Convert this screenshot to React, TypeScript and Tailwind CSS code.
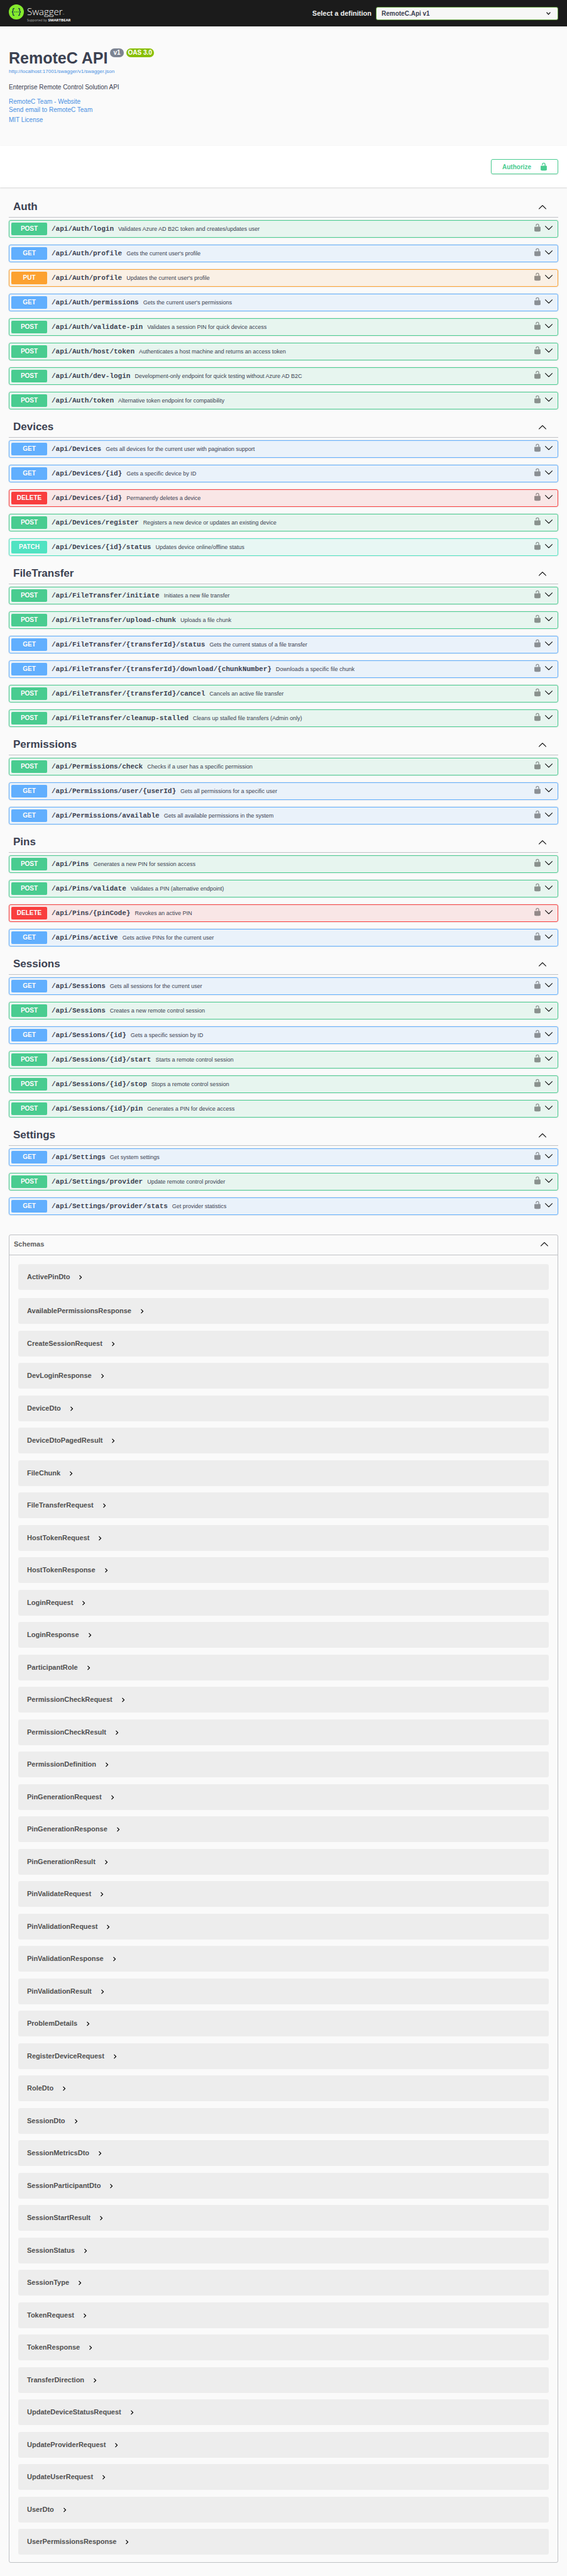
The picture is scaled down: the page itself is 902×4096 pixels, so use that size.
type Method = "GET" | "POST" | "PUT" | "DELETE" | "PATCH";
type Operation = [method: Method, path: string, summary: string];

const sections: { name: string; operations: Operation[] }[] = [
  {
    name: "Auth",
    operations: [
      ["POST", "/api/Auth/login", "Validates Azure AD B2C token and creates/updates user"],
      ["GET", "/api/Auth/profile", "Gets the current user's profile"],
      ["PUT", "/api/Auth/profile", "Updates the current user's profile"],
      ["GET", "/api/Auth/permissions", "Gets the current user's permissions"],
      ["POST", "/api/Auth/validate-pin", "Validates a session PIN for quick device access"],
      ["POST", "/api/Auth/host/token", "Authenticates a host machine and returns an access token"],
      ["POST", "/api/Auth/dev-login", "Development-only endpoint for quick testing without Azure AD B2C"],
      ["POST", "/api/Auth/token", "Alternative token endpoint for compatibility"],
    ],
  },
  {
    name: "Devices",
    operations: [
      ["GET", "/api/Devices", "Gets all devices for the current user with pagination support"],
      ["GET", "/api/Devices/{id}", "Gets a specific device by ID"],
      ["DELETE", "/api/Devices/{id}", "Permanently deletes a device"],
      ["POST", "/api/Devices/register", "Registers a new device or updates an existing device"],
      ["PATCH", "/api/Devices/{id}/status", "Updates device online/offline status"],
    ],
  },
  {
    name: "FileTransfer",
    operations: [
      ["POST", "/api/FileTransfer/initiate", "Initiates a new file transfer"],
      ["POST", "/api/FileTransfer/upload-chunk", "Uploads a file chunk"],
      ["GET", "/api/FileTransfer/{transferId}/status", "Gets the current status of a file transfer"],
      ["GET", "/api/FileTransfer/{transferId}/download/{chunkNumber}", "Downloads a specific file chunk"],
      ["POST", "/api/FileTransfer/{transferId}/cancel", "Cancels an active file transfer"],
      ["POST", "/api/FileTransfer/cleanup-stalled", "Cleans up stalled file transfers (Admin only)"],
    ],
  },
  {
    name: "Permissions",
    operations: [
      ["POST", "/api/Permissions/check", "Checks if a user has a specific permission"],
      ["GET", "/api/Permissions/user/{userId}", "Gets all permissions for a specific user"],
      ["GET", "/api/Permissions/available", "Gets all available permissions in the system"],
    ],
  },
  {
    name: "Pins",
    operations: [
      ["POST", "/api/Pins", "Generates a new PIN for session access"],
      ["POST", "/api/Pins/validate", "Validates a PIN (alternative endpoint)"],
      ["DELETE", "/api/Pins/{pinCode}", "Revokes an active PIN"],
      ["GET", "/api/Pins/active", "Gets active PINs for the current user"],
    ],
  },
  {
    name: "Sessions",
    operations: [
      ["GET", "/api/Sessions", "Gets all sessions for the current user"],
      ["POST", "/api/Sessions", "Creates a new remote control session"],
      ["GET", "/api/Sessions/{id}", "Gets a specific session by ID"],
      ["POST", "/api/Sessions/{id}/start", "Starts a remote control session"],
      ["POST", "/api/Sessions/{id}/stop", "Stops a remote control session"],
      ["POST", "/api/Sessions/{id}/pin", "Generates a PIN for device access"],
    ],
  },
  {
    name: "Settings",
    operations: [
      ["GET", "/api/Settings", "Get system settings"],
      ["POST", "/api/Settings/provider", "Update remote control provider"],
      ["GET", "/api/Settings/provider/stats", "Get provider statistics"],
    ],
  },
];

const schemas = [
  "ActivePinDto",
  "AvailablePermissionsResponse",
  "CreateSessionRequest",
  "DevLoginResponse",
  "DeviceDto",
  "DeviceDtoPagedResult",
  "FileChunk",
  "FileTransferRequest",
  "HostTokenRequest",
  "HostTokenResponse",
  "LoginRequest",
  "LoginResponse",
  "ParticipantRole",
  "PermissionCheckRequest",
  "PermissionCheckResult",
  "PermissionDefinition",
  "PinGenerationRequest",
  "PinGenerationResponse",
  "PinGenerationResult",
  "PinValidateRequest",
  "PinValidationRequest",
  "PinValidationResponse",
  "PinValidationResult",
  "ProblemDetails",
  "RegisterDeviceRequest",
  "RoleDto",
  "SessionDto",
  "SessionMetricsDto",
  "SessionParticipantDto",
  "SessionStartResult",
  "SessionStatus",
  "SessionType",
  "TokenRequest",
  "TokenResponse",
  "TransferDirection",
  "UpdateDeviceStatusRequest",
  "UpdateProviderRequest",
  "UpdateUserRequest",
  "UserDto",
  "UserPermissionsResponse",
];

const rowColors: Record<Method, string> = {
  GET: "border-[#61affe] bg-[#61affe]/10",
  POST: "border-[#49cc90] bg-[#49cc90]/10",
  PUT: "border-[#fca130] bg-[#fca130]/10",
  DELETE: "border-[#f93e3e] bg-[#f93e3e]/10",
  PATCH: "border-[#50e3c2] bg-[#50e3c2]/10",
};

const badgeColors: Record<Method, string> = {
  GET: "bg-[#61affe]",
  POST: "bg-[#49cc90]",
  PUT: "bg-[#fca130]",
  DELETE: "bg-[#f93e3e]",
  PATCH: "bg-[#50e3c2]",
};

function ArrowUp() {
  return (
    <svg viewBox="0 0 20 20" className="size-3.5 fill-black" aria-hidden="true">
      <path d="M17.418 14.908c.272.268.709.268.979 0s.271-.701 0-.969l-7.908-7.83c-.27-.268-.707-.268-.979 0l-7.908 7.83c-.27.268-.27.701 0 .969.271.268.709.268.979 0L10 7.767l7.418 7.141z" />
    </svg>
  );
}

function ArrowDown() {
  return (
    <svg viewBox="0 0 20 20" className="size-3.5 fill-black" aria-hidden="true">
      <path d="M17.418 6.109c.272-.268.709-.268.979 0s.271.701 0 .969l-7.908 7.83c-.27.268-.707.268-.979 0l-7.908-7.83c-.27-.268-.27-.701 0-.969.271-.268.709-.268.979 0L10 13.25l7.418-7.141z" />
    </svg>
  );
}

function Unlocked() {
  return (
    <svg viewBox="0 0 20 20" className="size-3.5 fill-current" aria-hidden="true">
      <path d="M15.8 8H14V5.6C14 2.703 12.665 1 10 1 7.334 1 6 2.703 6 5.6V6h2v-.801C8 3.754 8.797 3 10 3c1.203 0 2 .754 2 2.199V8H4c-.553 0-1 .646-1 1.199V17c0 .549.428 1.139.951 1.307l1.197.387C5.672 18.861 6.55 19 7.1 19h5.8c.549 0 1.428-.139 1.951-.307l1.196-.387c.524-.167.953-.757.953-1.306V9.199C17 8.646 16.352 8 15.8 8z" />
    </svg>
  );
}

function Logo() {
  return (
    <a href="#" className="flex items-start gap-[5px] text-white" aria-label="Swagger, supported by SmartBear">
      <svg viewBox="0 0 34 34" className="mt-[7px] size-6" aria-hidden="true">
        <circle cx="17" cy="17" r="17" fill="#85ea2d" />
        <g fill="none" stroke="#173647" strokeWidth="1.9" strokeLinecap="butt">
          <path d="M12.6 9.2h-.8c-1.7 0-2.4.9-2.4 2.4v2.6c0 1.7-.6 2.7-2.4 2.8 1.8.1 2.4 1.1 2.4 2.8v2.6c0 1.5.7 2.4 2.4 2.4h.8" />
          <path d="M21.4 9.2h.8c1.7 0 2.4.9 2.4 2.4v2.6c0 1.7.6 2.7 2.4 2.8-1.8.1-2.4 1.1-2.4 2.8v2.6c0 1.5-.7 2.4-2.4 2.4h-.8" />
        </g>
        <g fill="#173647">
          <circle cx="12.9" cy="17" r="1.15" />
          <circle cx="17" cy="17" r="1.15" />
          <circle cx="21.1" cy="17" r="1.15" />
        </g>
      </svg>
      <span className="flex flex-col pt-2 font-['Open_Sans',sans-serif]">
        <span className="flex items-end text-[15px] leading-5 font-light">
          Swagger<span className="text-[3px] leading-[10px]">™</span>
        </span>
        <span className="flex items-baseline gap-[2px] leading-2">
          <span className="text-[5px] text-[#b0b0b0]">Supported by</span>
          <span className="text-[6px] font-bold">SMARTBEAR</span>
        </span>
      </span>
    </a>
  );
}

function OperationRow({ operation }: { operation: Operation }) {
  const [method, path, summary] = operation;
  return (
    <div
      className={`mb-[11px] flex items-center rounded-[3px] border py-[3px] pr-[7px] pl-[3px] shadow-[0_0_2px_rgba(0,0,0,0.19)] ${rowColors[method]}`}
    >
      <button type="button" className="flex min-w-0 flex-1 items-center text-left">
        <span
          className={`w-[57px] shrink-0 rounded-[2px] text-center text-[10px] leading-5 font-bold text-white [text-shadow:0_1px_0_rgba(0,0,0,0.1)] ${badgeColors[method]}`}
        >
          {method}
        </span>
        <span className="flex items-baseline gap-[7px] pl-[7px] leading-5">
          <span className="font-['Liberation_Mono',monospace] text-[11px] font-semibold">{path}</span>
          <span className="text-[9px]">{summary}</span>
        </span>
      </button>
      <span className="flex gap-1 self-start pt-px">
        <button type="button" aria-label="Authorization" className="text-black opacity-40">
          <Unlocked />
        </button>
        <button type="button" aria-label={`Expand ${path}`}>
          <ArrowDown />
        </button>
      </span>
    </div>
  );
}

export default function App() {
  return (
    <div className="min-h-screen bg-[#fafafa] pb-[21px] font-['Liberation_Sans',Arial,sans-serif] text-[#3b4151]">
      <header className="flex h-[42px] items-start justify-between bg-[#1b1b1b] px-3.5">
        <Logo />
        <div className="flex items-center gap-[7px] self-center">
          <label htmlFor="definition" className="text-[11px] font-bold text-[#f0f0f0]">
            Select a definition
          </label>
          <div className="relative">
            <select
              id="definition"
              className="block h-[21px] w-[290px] appearance-none rounded-[3px] border border-[#62a03f] bg-[#f7f7f7] px-2 text-[10px] font-bold"
            >
              <option>RemoteC.Api v1</option>
            </select>
            <svg viewBox="0 0 10 10" className="pointer-events-none absolute top-[7px] right-3 size-[7px]" aria-hidden="true">
              <path d="M.8 2.4 5 6.9l4.2-4.5" fill="none" stroke="#000" strokeWidth="1.8" />
            </svg>
          </div>
        </div>
      </header>

      <section className="px-3.5 pt-[35px] pb-[35px] text-[10px] leading-[13px] text-[#4990e2]">
        <div className="flex items-start gap-1">
          <h1 className="text-[25px] leading-[30px] font-bold text-[#3b4151]">RemoteC API</h1>
          <span className="rounded-full bg-[#7d8492] px-[5px] leading-[14px] font-bold text-white">v1</span>
          <span className="rounded-full bg-[#89bf04] px-[3px] leading-[14px] font-bold text-white">OAS 3.0</span>
        </div>
        <a href="#" className="mt-px block text-[8px] leading-3">
          http://localhost:17001/swagger/v1/swagger.json
        </a>
        <p className="mt-3 leading-[14px] text-[#3b4151]">Enterprise Remote Control Solution API</p>
        <div className="mt-[9px] flex flex-col items-start">
          <a href="#">RemoteC Team - Website</a>
          <a href="#">Send email to RemoteC Team</a>
          <a href="#" className="mt-[3px]">
            MIT License
          </a>
        </div>
      </section>

      <section className="flex justify-end bg-white px-3.5 py-[21px] shadow-[0_1px_2px_rgba(0,0,0,0.15)]">
        <button
          type="button"
          className="flex h-6 w-[107px] items-center justify-between rounded-[3px] border border-[#49cc90] pr-[15px] pl-[17px] text-[10px] font-bold text-[#49cc90] shadow-[0_1px_2px_rgba(0,0,0,0.1)]"
        >
          Authorize
          <Unlocked />
        </button>
      </section>

      <main className="px-3.5 pt-3.5">
        {sections.map((section) => (
          <section key={section.name}>
            <h2 className="mb-1 border-b border-[#3b4151]/30">
              <button type="button" className="flex h-[33px] w-full items-center justify-between pr-[18px] pl-[7px] text-[17px] font-bold">
                {section.name}
                <ArrowUp />
              </button>
            </h2>
            {section.operations.map((operation) => (
              <OperationRow key={operation[0] + operation[1]} operation={operation} />
            ))}
          </section>
        ))}

        <section className="mt-[31px] rounded-[3px] border border-[#3b4151]/30">
          <h2 className="border-b border-[#3b4151]/30">
            <button type="button" className="flex h-[31px] w-full items-center justify-between pr-3.5 pb-[3px] pl-[7px] text-[11px] font-bold text-[#606060]">
              Schemas
              <ArrowUp />
            </button>
          </h2>
          <ul className="px-3.5 pt-3.5 pb-px">
            {schemas.map((schema) => (
              <li
                key={schema}
                className="rounded-[3px] bg-black/5 odd:mb-[10px] even:mb-[11px] nth-2:mt-[13px]"
              >
                <button type="button" className="flex h-[41px] items-center gap-[10px] px-3.5 text-[11px] font-bold text-[#505050]">
                  {schema}
                  <svg viewBox="0 0 24 24" className="size-3.5 fill-black" aria-hidden="true">
                    <path d="M10 6 8.59 7.41 13.17 12l-4.58 4.59L10 18l6-6z" />
                  </svg>
                </button>
              </li>
            ))}
          </ul>
        </section>
      </main>
    </div>
  );
}
